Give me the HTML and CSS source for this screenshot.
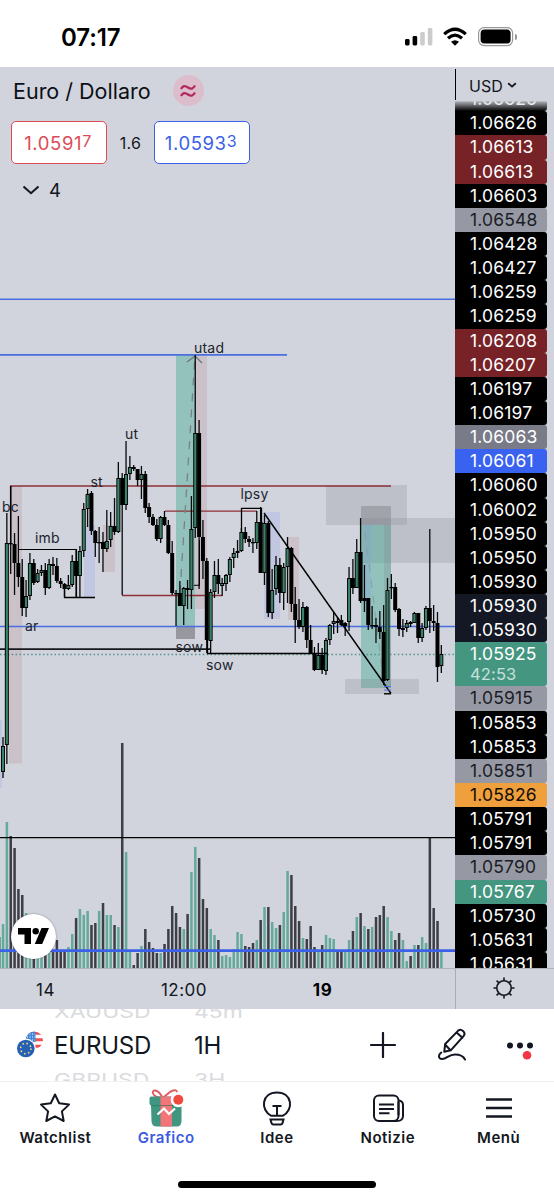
FILE: index.html
```html
<!DOCTYPE html>
<html lang="it">
<head>
    <meta charset="UTF-8">
    <meta name="viewport" content="width=device-width, initial-scale=1.0">
    <title>Euro / Dollaro</title>
    <link rel="stylesheet" href="styles.css">
</head>
<body>

<header class="status-bar">
    <span class="clock">07:17</span>
    <svg class="status-icons" width="110" height="22" viewBox="0 0 110 22">
        <rect x="1" y="13" width="4.6" height="6.5" rx="1.4"/>
        <rect x="8.6" y="10" width="4.6" height="9.5" rx="1.4"/>
        <rect x="16.2" y="6" width="4.6" height="13.5" rx="1.4" fill="#ccc"/>
        <rect x="23.8" y="2" width="4.6" height="17.5" rx="1.4" fill="#ccc"/>
        <g fill="none" stroke="#000" stroke-width="3.2">
            <path d="M40.2 8.2Q51 -1.8 61.8 8.2"/>
            <path d="M44 12.3Q51 6 58 12.3"/>
        </g>
        <path d="M47 15.8Q51 12.5 55 15.8L51 19.8Z"/>
        <rect x="74.6" y="1.6" width="34" height="18" rx="5.5" fill="none" stroke="#999" stroke-width="1.2"/>
        <rect x="76.6" y="3.6" width="30" height="14" rx="3.8"/>
    </svg>
    <span class="battery-tip"></span>
</header>

<main class="chart">
    <section class="pane">
        <svg id="plot" width="455" height="901" viewBox="0 67 455 901"></svg>
        <div class="legend">
            <div class="title">
                <h1>Euro / Dollaro</h1>
                <span class="badge">
                    <svg width="18" height="16" viewBox="0 0 18 16"><path d="M2 6C4 2.5 6 2.5 9 4.5S14 6 16 2.5M2 13C4 9.5 6 9.5 9 11.5S14 13 16 9.500" fill="none" stroke="#b3275f" stroke-width="2.3"/></svg>
                </span>
            </div>
            <div class="quotes">
                <button class="quote sell">1.0591<sup>7</sup></button>
                <span class="spread">1.6</span>
                <button class="quote buy">1.0593<sup>3</sup></button>
            </div>
            <div class="indicators">
                <svg width="18" height="10" viewBox="0 0 18 10"><path d="M1.5 1.5L9 8.2L16.5 1.5" fill="none" stroke="#131722" stroke-width="2.1"/></svg>
                <span>4</span>
            </div>
        </div>
        <div class="tv-logo">
            <svg width="31" height="17" viewBox="0 0 31 17"><path d="M0 0H13V16H6.5V6.5H0Z"/><circle cx="17.7" cy="3.3" r="3.2"/><path d="M23.5 0H31L24.2 16H16.8Z"/></svg>
        </div>
    </section>

    <aside class="price-axis">
        <div class="currency">USD<svg width="10" height="7" viewBox="0 0 10 7"><path d="M1.2 1.2L5 4.6L8.8 1.2" fill="none" stroke="#131722" stroke-width="1.9"/></svg></div>
        <div class="prices" id="prices"></div>
    </aside>

    <div class="time-axis">
        <span class="t1">14</span>
        <span class="t2">12:00</span>
        <span class="t3">19</span>
    </div>
    <div class="axis-settings">
        <svg width="24" height="24" viewBox="0 0 24 24" fill="none" stroke="#131722" stroke-width="1.6"><circle cx="12" cy="12" r="7.2"/><path d="M12 1.5V4.8M12 19.2V22.5M1.5 12H4.8M19.2 12H22.5M4.6 4.6L6.9 6.9M17.1 17.1L19.4 19.4M4.6 19.4L6.9 17.1M17.1 6.9L19.4 4.6"/></svg>
    </div>
</main>

<section class="toolbar">
    <svg class="flags" width="28" height="28" viewBox="0 0 28 28">
        <defs><clipPath id="us"><circle cx="17.3" cy="9.2" r="8.6"/></clipPath></defs>
        <g clip-path="url(#us)">
            <rect x="8" width="20" height="20" fill="#fff"/>
            <path d="M8 2.2H28M8 8.8H28M8 15.2H28" stroke="#ef4f58" stroke-width="3"/>
            <rect x="8" width="10.5" height="11" fill="#3f86d6"/>
            <path d="M10 3H18M10 6H18M10 9H18" stroke="#fff" stroke-width="1" stroke-dasharray="1 1.5"/>
        </g>
        <circle cx="8.8" cy="17.5" r="10" fill="#fff"/>
        <circle cx="8.8" cy="17.5" r="8.8" fill="#2560b5"/>
        <circle cx="8.8" cy="17.5" r="5.2" fill="none" stroke="#f2dc7c" stroke-width="1.6" stroke-dasharray="1.6 2.484"/>
    </svg>
    <div class="wheel symbols">
        <span class="faded">XAUUSD</span>
        <span>EURUSD</span>
        <span class="faded">GBPUSD</span>
    </div>
    <div class="wheel intervals">
        <span class="faded">45m</span>
        <span>1H</span>
        <span class="faded">3H</span>
    </div>
    <div class="tools">
        <svg width="26" height="26" viewBox="0 0 26 26"><path d="M13 1V25M1 13H25" stroke="#131722" stroke-width="2.2" stroke-linecap="round"/></svg>
        <svg width="30" height="34" viewBox="0 0 30 34" fill="none" stroke="#131722" stroke-width="2" stroke-linejoin="round" stroke-linecap="round"><path d="M8.2 16L21.2 2.6Q23.6 .8 26 3Q28.8 5.6 26.5 8.2L14 22.2L7.200 23.8ZM8 16.500L13.5 22.2M19.6 4.6L25.4 9.8M4.2 24.6C1 26.5 1.2 31 5 31C10 31 11.5 26.5 18 26.5Q25.5 26.5 28 31.5"/></svg>
        <svg width="28" height="20" viewBox="0 0 28 20"><g fill="#131722"><circle cx="4" cy="5.5" r="3"/><circle cx="14" cy="5.5" r="3"/><circle cx="24" cy="5.5" r="3"/></g><circle cx="21" cy="15.3" r="4.3" fill="#f23645"/></svg>
    </div>
</section>

<nav class="tabs">
    <a class="tab">
        <svg width="36" height="40" viewBox="0 0 36 40"><path d="M18 6.5L22.2 15.3L32 16.6L24.9 23.4L26.7 33L18 28.4L9.3 33L11.1 23.4L4 16.6L13.8 15.3Z" fill="none" stroke="#131722" stroke-width="2" stroke-linejoin="round"/></svg>
        <span>Watchlist</span>
    </a>
    <a class="tab active">
        <svg width="36" height="40" viewBox="0 0 36 40">
            <path d="M14 8.5C9 0 3.5 2 5 5.5S11 9.500 14 9.500C17 9.500 20 4 25 2.500S30 6 27 9" fill="none" stroke="#df5b5f" stroke-width="1.9"/>
            <path d="M3 17H33.500V33Q33.500 38.5 28.5 38.5H9Q3.5 38.5 3.5 33Z" fill="#409681"/>
            <rect x="1.500" y="8.500" width="33" height="9" rx="2" fill="#409681"/>
            <path d="M12.5 8.500H24V38.5H12.5Z" fill="#f2757a"/>
            <path d="M3 17.5H34" stroke="#2b705f" opacity=".6"/>
            <path d="M9.5 26.5L16 20.5L21 26L27 20.5" fill="none" stroke="#fff" stroke-width="2.2"/>
            <circle cx="30.300" cy="11.7" r="7.6" fill="#fff"/><circle cx="30.3" cy="11.7" r="5" fill="#ee4a40"/>
        </svg>
        <span>Grafico</span>
    </a>
    <a class="tab">
        <svg width="36" height="40" viewBox="0 0 36 40" fill="none" stroke="#131722" stroke-width="2"><path d="M12.3 27.8C1 22 2.5 4.5 18 4.5S35 22 23.7 27.8ZM13.5 18H22.5M18 18V27.5M11.5 31.5H24.5L23.5 35.2Q23 36.5 21.7 36.5H14.3Q13 36.5 12.5 35.2Z"/></svg>
        <span>Idee</span>
    </a>
    <a class="tab">
        <svg width="36" height="40" viewBox="0 0 36 40" fill="none" stroke="#131722" stroke-width="2"><rect x="4" y="7.5" width="24.5" height="25.5" rx="5"/><path d="M28.5 12.5Q33 13 33 17V28.5Q32.5 33 27 33H22M28.5 14V27M9 16.5H24M9 21H24M9 25.2H19.5"/></svg>
        <span>Notizie</span>
    </a>
    <a class="tab">
        <svg width="36" height="40" viewBox="0 0 36 40"><path d="M5 11.5H31M5 20H31M5 28.5H31" stroke="#131722" stroke-width="2.4"/></svg>
        <span>Menù</span>
    </a>
</nav>
<div class="home-indicator"></div>

<script src="chart.js"></script>
</body>
</html>
```
FILE: styles.css
```css
* {
    box-sizing: border-box;
}

body {
    margin: 0;
    width: 554px;
    height: 1200px;
    overflow: hidden;
    background: #fff;
    color: #131722;
    font-family: Inter, "Liberation Sans", sans-serif;
}

.status-bar {
    height: 67px;
    display: flex;
    align-items: center;
    padding: 7px 37px 0 61px;
}

.clock {
    font-size: 24px;
    font-weight: 600;
    color: #000;
    letter-spacing: -0.1px;
}

.status-icons {
    margin-left: auto;
}

.battery-tip {
    width: 2px;
    height: 6px;
    margin-left: 1px;
    border-radius: 0 2px 2px 0;
    background: #999;
}

.chart {
    display: grid;
    grid-template-columns: 455px 99px;
    grid-template-rows: 901px 41px;
    background: #d1d4dc;
}

.pane {
    position: relative;
}

#plot {
    display: block;
}

#plot text {
    font-size: 14px;
    letter-spacing: 0.2px;
    fill: #20232c;
}

.legend {
    position: absolute;
    top: 0;
    left: 0;
    padding: 8px 11px;
}

.title {
    display: flex;
    align-items: center;
    gap: 22px;
}

h1 {
    margin: 0 0 0 2px;
    font-size: 21.5px;
    font-weight: 400;
    color: #0c0e15;
}

.badge {
    width: 31px;
    height: 31px;
    border-radius: 50%;
    background: #dbbdcc;
    display: flex;
    align-items: center;
    justify-content: center;
}

.quotes {
    display: flex;
    align-items: center;
    margin-top: 15px;
}

.quote {
    width: 96px;
    height: 43px;
    padding: 0 2px 0 0;
    border: 1.5px solid;
    border-radius: 5px;
    background: #fff;
    font-family: inherit;
    font-size: 18.5px;
    letter-spacing: 0.6px;
}

.quote sup {
    font-size: 16px;
    line-height: 0;
    vertical-align: 3px;
}

.sell {
    color: #dc4b55;
}

.buy {
    color: #3b5fe8;
}

.spread {
    width: 47px;
    text-align: center;
    font-size: 16px;
    letter-spacing: 0.3px;
}

.indicators {
    display: flex;
    align-items: center;
    gap: 9px;
    margin: 15px 0 0 11px;
    font-size: 18.5px;
}

.tv-logo {
    position: absolute;
    left: 11px;
    top: 847px;
    width: 45px;
    height: 45px;
    border-radius: 50%;
    background: #fff;
    box-shadow: 0 0 2px rgba(0, 0, 0, 0.4);
    display: flex;
    align-items: center;
    justify-content: center;
}

.price-axis {
    height: 901px;
    overflow: hidden;
}

.currency {
    height: 31px;
    margin-top: 2px;
    padding: 7px 0 0 13px;
    border-left: 1.5px solid #000;
    font-size: 16px;
    line-height: 20px;
}

.currency svg {
    margin: 0 0 3px 4px;
}

.prices {
    width: 92px;
    margin-top: -12.8px;
    font-size: 17.5px;
    letter-spacing: 0.15px;
}

.price {
    height: 24.15px;
    padding-left: 15px;
    line-height: 24px;
    border-radius: 0 3px 3px 0;
    background: #000;
    color: #fff;
}

.price:first-child {
    color: #e9eaee;
    background: linear-gradient(#d1d4dc 52%, #000);
    clip-path: inset(14px 0 0 0);
}

.price.red { background: #772226; }
.price.gray { background: #9699a3; color: #1b1d26; }
.price.slate { background: #797b88; }
.price.blue { background: #3a62f0; }
.price.navy { background: #141825; }
.price.green { background: #459681; }
.price.orange { background: #ef9f3b; color: #130f08; }

.price.last {
    height: 44px;
    line-height: 24px;
}

.price.last small {
    display: block;
    font-size: 16.5px;
    line-height: 16px;
    color: #c5e0da;
}

.time-axis {
    display: grid;
    grid-template-columns: 91px 186px 91px;
    align-items: center;
    text-align: center;
    border-top: 1px solid #b0b3bc;
    padding-top: 2px;
    font-size: 17px;
    letter-spacing: 0.5px;
}

.t3 {
    font-weight: 700;
    color: #000;
}

.axis-settings {
    border-top: 1px solid #b0b3bc;
    border-left: 1px solid #a9acb5;
    padding: 7px 0 0 36px;
}

.toolbar {
    height: 73px;
    display: flex;
    align-items: center;
    padding: 0 20px 0 17px;
    border-bottom: 1px solid #f0f1f3;
}

.wheel {
    height: 72px;
    overflow: hidden;
    display: flex;
    flex-direction: column;
    justify-content: center;
    padding-top: 2px;
    font-size: 24px;
    line-height: 36px;
    letter-spacing: -0.2px;
    white-space: nowrap;
}

.faded {
    flex: none;
    height: 32px;
    line-height: 32px;
    font-size: 23px;
    letter-spacing: 0;
    color: #dadbde;
    transform: scaleY(0.75);
}

.symbols {
    width: 140px;
    margin-left: 9px;
}

.tools {
    margin-left: auto;
    display: flex;
    align-items: center;
    gap: 41px;
}

.tools svg:last-child {
    margin: 10px 0 0 -2px;
}

.tabs {
    display: flex;
    height: 98px;
    padding-top: 6px;
}

.tab {
    flex: 1;
    display: flex;
    flex-direction: column;
    align-items: center;
    font-size: 15px;
    font-weight: 600;
    line-height: 20px;
    letter-spacing: 0.5px;
}

.active {
    color: #3a5be0;
}

.home-indicator {
    width: 198px;
    height: 7px;
    margin: 1px auto 0;
    border-radius: 4px;
    background: #000;
}
```
FILE: chart.js
```js
// high, body top, body bottom, low, rising
var candles = [
    [737,746,772,778,1],[513,543,745,764,1],[486,543,544,574,0],[533,544,563,595,0],[516,563,577,587,0],
    [559,577,608,616,0],[580,596,608,617,1],[553,563,596,600,1],[559,563,583,585,0],[569,573,582,583,1],
    [565,570,573,576,1],[563,570,588,595,0],[559,564,588,589,1],[557,564,566,575,0],[558,566,581,583,0],
    [578,581,584,588,0],[583,584,589,597,0],[575,585,589,590,1],[555,561,585,587,1],[550,561,576,597,0],
    [546,551,576,598,1],[503,509,551,557,1],[489,494,509,527,1],[491,493,531,535,0],[530,531,543,557,0],
    [527,542,543,563,0],[532,542,549,572,0],[510,541,549,552,1],[512,526,540,547,1],[498,526,532,535,0],
    [462,478,532,533,1],[473,478,505,595,0],[441,474,505,510,1],[456,467,474,480,1],[465,467,469,471,0],
    [469,469,480,486,0],[466,474,480,499,1],[471,474,508,513,0],[503,507,517,523,0],[514,517,525,526,0],
    [519,525,539,541,0],[516,517,539,543,1],[511,517,525,526,0],[520,525,553,554,0],[541,553,593,595,0],
    [590,593,594,626,0],[581,593,606,606,0],[587,588,606,625,1],[580,588,590,609,0],[496,529,590,609,1],
    [355,433,528,538,1],[420,433,537,589,0],[520,537,561,579,0],[558,561,640,653,0],[589,592,641,653,1],
    [561,575,592,598,1],[559,575,584,594,0],[578,583,586,596,1],[574,575,584,591,1],[557,559,575,582,1],
    [548,553,558,568,1],[540,551,553,558,0],[528,532,551,552,1],[527,532,539,543,0],[536,539,542,547,0],
    [538,542,543,553,0],[511,522,543,549,1],[507,522,573,573,0],[515,523,573,585,1],[521,523,613,617,0],
    [569,590,613,619,1],[556,565,589,595,1],[558,565,593,603,0],[563,567,593,610,1],[537,548,567,603,1],
    [547,548,604,612,0],[587,604,620,643,0],[599,620,627,629,0],[602,607,627,632,1],[606,607,640,648,0],
    [625,640,653,654,0],[647,654,670,671,0],[643,655,670,670,1],[648,655,670,674,0],[638,640,671,675,1],
    [624,625,640,645,1],[612,621,624,634,1],[617,621,623,633,0],[615,620,625,626,0],[622,623,626,636,0],
    [567,578,622,631,1],[559,578,588,594,0],[539,552,588,588,1],[518,552,601,603,0],[565,598,601,612,0],
    [598,598,625,630,0],[606,625,626,629,0],[618,625,627,643,0],[611,627,632,639,0],[605,632,681,685,0],
    [578,590,680,681,1],[574,587,588,599,0],[583,587,610,612,0],[608,609,629,636,0],[619,628,630,637,0],
    [620,623,628,632,1],[621,622,624,627,0],[612,613,623,623,1],[613,613,638,643,0],[623,628,638,642,1],
    [606,608,628,630,1],[529,608,621,633,0],[605,621,623,631,0],[612,623,667,682,0],[645,654,666,673,1]
];

// bar heights, g = up volume, d = down volume
var volumes = ('g44 g146 d132 d120 d79 d73 g55 g50 d44 g40 g36 d30 g18 d18 d28 d17 d17 g21 g34 d50 g59 g53 g57 ' +
    'd43 d45 g57 d65 g53 g53 d43 g41 d225 g116 g17 d3 d15 g22 d39 d26 d20 d15 g15 d24 d39 d62 d55 d41 g39 ' +
    'd54 g96 g121 d110 d69 d60 g39 g33 d28 g12 g13 g11 g19 g36 g34 d22 d21 d25 g28 d48 g61 d61 g46 g40 d43 g56 ' +
    'g97 d93 d62 d47 g30 d29 d42 d21 g18 d23 g33 g30 g29 d17 d17 g17 g28 d37 g51 d55 g42 d39 g41 d51 d53 d62 ' +
    'g51 g37 d28 d35 g28 g7 d12 g23 d23 g31 g25 d130 d60 d47 g17').split(' ');

function rect(x1, y1, x2, y2, fill) {
    return '<rect x="' + x1 + '" y="' + y1 + '" width="' + (x2 - x1) + '" height="' + (y2 - y1) + '" fill="' + fill + '"/>';
}

function line(points, color, width, dash) {
    return '<polyline points="' + points + '" fill="none" stroke="' + color + '" stroke-width="' + width +
        '"' + (dash ? ' stroke-dasharray="' + dash + '"' : '') + '/>';
}

function label(x, y, text) {
    return '<text x="' + x + '" y="' + y + '">' + text + '</text>';
}

var pink = 'rgba(170,90,95,0.15)';
var gray = 'rgba(120,123,134,0.22)';
var teal = 'rgba(55,165,140,0.4)';
var lilac = 'rgba(130,150,240,0.2)';
var red = '#8d3037';
var blue = '#4a6ee0';
var out = '';

// volume
volumes.forEach(function (v, i) {
    var x = 3 + i * 3.845;
    out += rect(x - 1.2, 968 - v.slice(1), x + 1.3, 968, v[0] === 'g' ? '#65a99b' : '#3d3e46');
});
out += rect(0, 937, 1, 968, '#65a99b');

// zones
out += rect(0, 720, 2, 788, lilac) + rect(9, 486, 22, 763.5, pink);
out += rect(84, 525, 95, 598, lilac) + rect(103, 525, 115, 572, pink);
out += rect(176, 355, 195, 626, teal) + rect(176, 626, 195, 639, 'rgba(110,110,118,0.6)');
out += rect(195, 355, 207, 609, pink);
out += rect(264, 512, 280, 619, lilac) + rect(288, 537, 299, 620, pink);
out += rect(326, 485, 407, 525, gray) + rect(361, 506, 391, 525, 'rgba(110,110,118,0.35)');
out += rect(361, 518, 455, 563, gray) + rect(361, 525, 391, 688, teal) + rect(364, 525, 371, 610, lilac);
out += rect(384, 525, 391, 688, 'rgba(120,123,134,0.2)') + rect(345, 679, 419, 694, gray);

// levels
out += line('0,299.3 455,299.3', blue, 1.6) + line('0,354.8 287,354.8', blue, 1.8);
out += line('0,626.5 455,626.5', blue, 1.3);
out += line('10,486 391,486', red, 1.4) + line('165,511.2 257,511.2', red, 1.3) + line('122,595.5 222,595.5', red, 1.3);
out += line('0,649.2 210,649.2', '#17181d', 1.7);
out += line('0,654.4 455,654.4', '#55928b', 1.5, '1.5 2.4');
out += line('0,837.6 455,837.6', '#000', 1.4) + line('0,950.6 455,950.6', '#3b61e8', 2.6);
out += line('180,593 195,356', '#7b8188', 1.3, '8 8') + line('187,362 195,356 202,363', '#6c7076', 1.2);
out += line('365,532 384,684', '#83a5a5', 1.2, '8 8');

// candles
candles.forEach(function (c, i) {
    var x = 3 + i * 3.845;
    out += rect(x - 0.65, c[0], x + 0.65, c[3], '#08090b');
    out += rect(x - 2, c[1], x + 2, Math.max(c[2], c[1] + 1.3), '#000');
    if (c[4] && c[2] - c[1] > 2) {
        out += rect(x - 1.1, c[1] + 1, x + 1.1, c[2] - 1, '#3b8069');
    }
});

// drawings
out += line('10.7,543 10.7,486', '#000', 1.3) + line('19,549.5 76.5,549.5 76.5,597', '#000', 1.2);
out += line('64.5,585 64.5,597.5 95,597.5', '#000', 1.3);
out += line('241.5,532 241.5,508.3 261.5,508.3 261.5,522', '#000', 1.3);
out += line('194,585.3 199.5,585.3 199.5,540', '#000', 1);
out += line('207.5,640 207.5,653.5 327,653.5', '#000', 1.3);
out += line('264,513 391,693.5', '#000', 1.4);
out += line('384,686.5 391,686.5', blue, 1) + line('384,690 391,690', blue, 1) + line('384,693.8 391,693.8', '#000', 1.4);

out += label(2, 512, 'bc') + label(35, 543, 'imb') + label(25, 631, 'ar') + label(90.5, 487, 'st');
out += label(125, 439, 'ut') + label(194, 353, 'utad') + label(240.5, 499, 'lpsy');
out += label(175.5, 651.5, 'sow') + label(206, 670, 'sow');

document.getElementById('plot').innerHTML = out;

var prices = [
    ['1.06626'], ['1.06626'], ['1.06613', 'red'], ['1.06613', 'red'], ['1.06603'], ['1.06548', 'gray'],
    ['1.06428'], ['1.06427'], ['1.06259'], ['1.06259'], ['1.06208', 'red'], ['1.06207', 'red'],
    ['1.06197'], ['1.06197'], ['1.06063', 'slate'], ['1.06061', 'blue'], ['1.06060'], ['1.06002'],
    ['1.05950'], ['1.05950'], ['1.05930'], ['1.05930', 'navy'], ['1.05930', 'navy'],
    ['1.05925<small>42:53</small>', 'green last'], ['1.05915', 'gray'], ['1.05853'], ['1.05853'],
    ['1.05851', 'gray'], ['1.05826', 'orange'], ['1.05791'], ['1.05791'], ['1.05790', 'gray'],
    ['1.05767', 'green'], ['1.05730'], ['1.05631'], ['1.05631']
];

document.getElementById('prices').innerHTML = prices.map(function (p) {
    return '<div class="price ' + (p[1] || '') + '">' + p[0] + '</div>';
}).join('');
```
